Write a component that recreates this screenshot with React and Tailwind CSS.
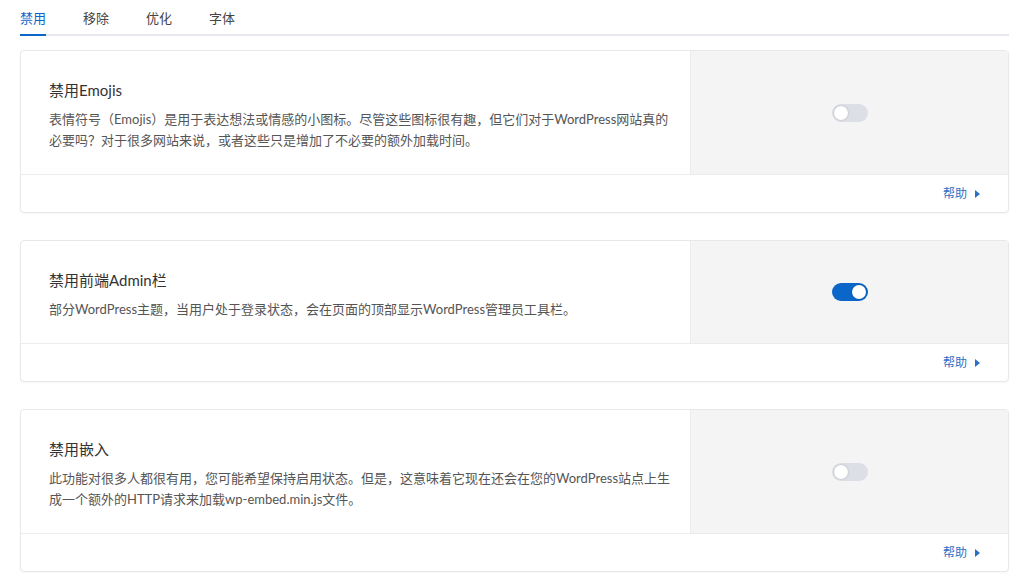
import { useState } from "react";

const tabs = ["禁用", "移除", "优化", "字体"];

const settings = [
  {
    title: "禁用Emojis",
    description:
      "表情符号（Emojis）是用于表达想法或情感的小图标。尽管这些图标很有趣，但它们对于WordPress网站真的必要吗？对于很多网站来说，或者这些只是增加了不必要的额外加载时间。",
    enabled: false
  },
  {
    title: "禁用前端Admin栏",
    description: "部分WordPress主题，当用户处于登录状态，会在页面的顶部显示WordPress管理员工具栏。",
    enabled: true
  },
  {
    title: "禁用嵌入",
    description:
      "此功能对很多人都很有用，您可能希望保持启用状态。但是，这意味着它现在还会在您的WordPress站点上生成一个额外的HTTP请求来加载wp-embed.min.js文件。",
    enabled: false
  }
];

function Toggle({ checked, onChange }) {
  return (
    <button
      type="button"
      onClick={onChange}
      className={
        checked
          ? "flex h-[18px] w-[36px] items-center justify-end rounded-full bg-[#0a66c9] px-[2px]"
          : "flex h-[18px] w-[36px] items-center justify-start rounded-full bg-[#dcdfe6] px-[2px]"
      }
    >
      <span className="block h-[14px] w-[14px] rounded-full bg-white shadow-[0_0_2px_rgba(0,0,0,0.25)]" />
    </button>
  );
}

function SettingCard({ item }) {
  const [on, setOn] = useState(item.enabled);
  return (
    <div className="rounded-[4px] border border-[#e8e8e8] bg-white shadow-[0_1px_2px_rgba(0,0,0,0.04)]">
      <div className="flex border-b border-[#ececec]">
        <div className="flex-1 pb-[23px] pl-[28px] pr-[14px] pt-[28px]">
          <h3 className="text-[15px] leading-[22px] text-[#333]">{item.title}</h3>
          <p className="mt-[8px] text-[13px] leading-[21px] text-[#555]">{item.description}</p>
        </div>
        <div className="flex w-[318px] items-center justify-center border-l border-[#ececec] bg-[#f4f4f4]">
          <Toggle checked={on} onChange={() => setOn(!on)} />
        </div>
      </div>
      <div className="flex h-[37px] items-center justify-end pr-[28px]">
        <a href="#" className="flex items-center gap-[8px] text-[12px] text-[#2a6fc4]">
          帮助
          <span className="block h-0 w-0 border-y-[4px] border-l-[5px] border-y-transparent border-l-[#2a6fc4]" />
        </a>
      </div>
    </div>
  );
}

export default function App() {
  const [active, setActive] = useState(0);
  return (
    <div
      className="min-h-[577px] bg-white pl-[20px] pr-[15px] pt-[8px]"
      style={{ fontFamily: 'Lato, "Noto Sans CJK SC", sans-serif' }}
    >
      <div className="flex gap-[37px] border-b-2 border-[#e6e8ee]">
        {tabs.map((tab, i) => (
          <button
            key={tab}
            type="button"
            onClick={() => setActive(i)}
            className={
              i === active
                ? "-mb-[2px] border-b-2 border-[#0a66c9] pb-[6px] text-[13px] leading-[20px] text-[#0a66c9]"
                : "-mb-[2px] border-b-2 border-transparent pb-[6px] text-[13px] leading-[20px] text-[#444]"
            }
          >
            {tab}
          </button>
        ))}
      </div>
      <div className="mt-[14px] flex flex-col gap-[27px]">
        {settings.map((item) => (
          <SettingCard key={item.title} item={item} />
        ))}
      </div>
    </div>
  );
}
